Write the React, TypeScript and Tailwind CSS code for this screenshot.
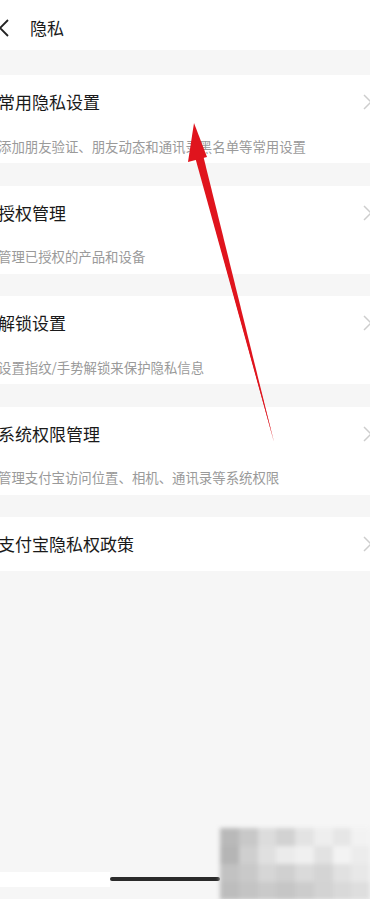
import React from "react";

const items = [
  { title: "常用隐私设置", desc: "添加朋友验证、朋友动态和通讯录黑名单等常用设置" },
  { title: "授权管理", desc: "管理已授权的产品和设备" },
  { title: "解锁设置", desc: "设置指纹/手势解锁来保护隐私信息" },
  { title: "系统权限管理", desc: "管理支付宝访问位置、相机、通讯录等系统权限" },
  { title: "支付宝隐私权政策" },
];

const mosaic = [
  ["#b9b9b9", "#c8c8c8", "#dcdcdc", "#d2d2d2", "#e3e3e3", "#eeeeee", "#e6e6e6", "#f2f2f2"],
  ["#b5b5b5", "#cfcfcf", "#e0e0e0", "#ebebeb", "#f0f0f0", "#e2e2e2", "#f3f3f3", "#ececec"],
  ["#c2c2c2", "#c9c9c9", "#d6d6d6", "#d0d0d0", "#dadada", "#d4d4d4", "#e1e1e1", "#e8e8e8"],
  ["#bdbdbd", "#c4c4c4", "#cacaca", "#c6c6c6", "#cccccc", "#d3d3d3", "#d9d9d9", "#dedede"],
];

function Chevron() {
  return (
    <svg width="12" height="18" viewBox="0 0 12 18" className="shrink-0 -mr-[4px]">
      <path d="M2 2 L9 9 L2 16" fill="none" stroke="#cdcdcd" strokeWidth="1.5" />
    </svg>
  );
}

export default function App() {
  return (
    <div
      className="relative h-[899px] w-[370px] overflow-hidden bg-[#f6f6f6]"
      style={{ fontFamily: '"Noto Sans CJK SC", "Noto Sans", sans-serif' }}
    >
      <div className="flex h-[50px] items-center bg-white pt-[6px]">
        <svg width="12" height="20" viewBox="0 0 12 20" className="-ml-[2px]">
          <path d="M10 2 L2 10 L10 18" fill="none" stroke="#222" strokeWidth="1.8" />
        </svg>
        <span className="ml-[20px] text-[17px] text-[#1a1a1a]">隐私</span>
      </div>

      <div className="flex flex-col gap-[22.5px] pt-[25px]">
        {items.map((it) => (
          <div key={it.title} className="flex flex-col bg-white -ml-[2px]">
            <div className="flex h-[54px] items-center justify-between">
              <span className="text-[17px] text-[#1a1a1a]">{it.title}</span>
              <Chevron />
            </div>
            {it.desc && (
              <div className="flex h-[34px] items-center text-[13.4px] text-[#9a9a9a]">
                {it.desc}
              </div>
            )}
          </div>
        ))}
      </div>

      {/* red annotation arrow */}
      <svg className="absolute left-0 top-0" width="370" height="899" viewBox="0 0 370 899">
        <path d="M274 442 L201 160 L197 161 Z" fill="#c8161e" />
        <path d="M274 442 L203 155 L195 157 Z" fill="#e0141d" />
        <path d="M194 123 L188 162 L207 157 Z" fill="#e0141d" />
      </svg>

      {/* home indicator */}
      <div className="absolute left-0 top-[872px] h-[15px] w-[110px] bg-white" />
      <div className="absolute left-[110px] top-[877px] h-[4px] w-[110px] rounded-full bg-[#2a2a2a]" />

      {/* blurred watermark mosaic */}
      <div className="absolute left-[220px] top-[828px] grid w-[150px] grid-cols-8 blur-[2px]">
        {mosaic.flat().map((c, i) => (
          <div key={i} className="h-[18px]" style={{ backgroundColor: c }} />
        ))}
      </div>
    </div>
  );
}
